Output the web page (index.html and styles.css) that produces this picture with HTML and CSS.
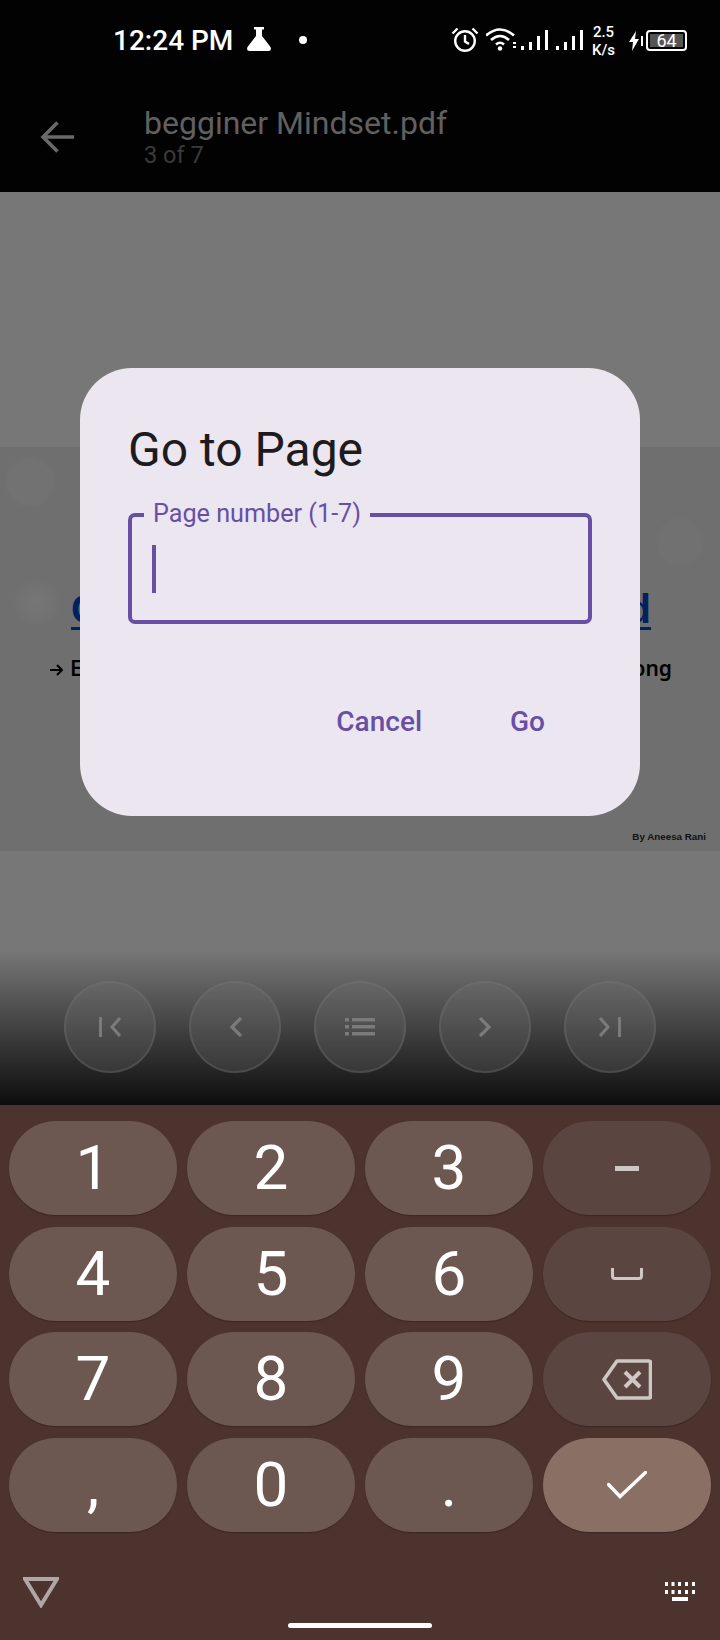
FILE: index.html
```html
<!DOCTYPE html>
<html lang="en">
<head>
    <meta charset="UTF-8">
    <meta name="viewport" content="width=device-width, initial-scale=1.0">
    <title>Go to Page</title>
    <link rel="stylesheet" href="styles.css">
</head>
<body>
    <div id="screen">
        <div class="status-bar">
            <span class="clock">12:24 PM</span>
            <svg class="flask" width="26" height="24" viewBox="0 0 26 24"><path d="M8 0h10v2.500h-2v6.500l8.500 11q1.500 4-2 4h-19q-3.500 0-2-4l8.500-11v-6.500h-2z" fill="#fff"/></svg>
            <span class="dot"></span>
            <div class="status-icons">
                <svg width="28" height="25" viewBox="0 0 28 25" fill="none" stroke="#fff" stroke-width="2.400"><circle cx="14" cy="14" r="9.800"/><path d="M14 8v6.500l4 2.500M1.500 6.500l5-5M26.500 6.500l-5-5"/></svg>
                <svg class="wifi" width="31" height="24" viewBox="0 0 31 24" fill="none" stroke="#fff" stroke-width="2.600"><path d="M0 8.500q14-12 28 0M5 13q9-8 18 0M10 17.500q4-3.500 8 0"/><circle cx="14" cy="21.500" r="2.200" fill="#fff" stroke="none"/><path d="M27 16h3M27 20h3" stroke-width="2"/></svg>
                <svg class="signal" width="62" height="24" viewBox="0 0 62 24" fill="#fff"><rect x="0" y="19" width="3" height="4"/><rect x="8" y="15" width="3" height="8"/><rect x="16" y="9" width="3" height="14"/><rect x="24" y="3" width="3" height="20"/><rect x="35" y="19" width="3" height="4"/><rect x="43" y="15" width="3" height="8"/><rect x="51" y="9" width="3" height="14"/><rect x="59" y="3" width="3" height="20"/></svg>
                <div class="speed"><span>2.5</span><span>K/s</span></div>
                <svg class="bolt" width="14" height="20" viewBox="0 0 14 20" fill="#fff"><path d="M7 0l-7 11h4l-1 9 7-12h-4zM12 5h2v10h-2z"/></svg>
                <div class="battery"><span class="battery-fill">64</span></div>
            </div>
        </div>
        <div class="app-bar">
            <svg class="back" width="34" height="32" viewBox="0 0 34 32" fill="none" stroke="#6a6a6a" stroke-width="3.600"><path d="M34 16H3M17.500 1.500L3 16l14.500 14.500"/></svg>
            <div class="app-title">
                <div class="file-name">begginer Mindset.pdf</div>
                <div class="page-count">3 of 7</div>
            </div>
        </div>

        <div class="viewer">
            <div class="doc">
                <div class="doc-heading"><span>C</span><span>d</span></div>
                <div class="doc-line">
                    <span class="doc-lead"><svg width="13" height="12" viewBox="0 0 13 12" fill="none" stroke="#000" stroke-width="2.200"><path d="M0 6h11.500M7 1l5 5-5 5"/></svg>E</span>
                    <span>ong</span>
                </div>
                <div class="doc-author">By Aneesa Rani</div>
            </div>

            <div class="controls">
                <button class="round-btn"><svg width="22" height="20" viewBox="0 0 22 20" fill="none" stroke="#7b7b7b" stroke-width="3"><path d="M1.500 0v20M21 1l-8 9 8 9"/></svg></button>
                <button class="round-btn"><svg width="13" height="20" viewBox="0 0 13 20" fill="none" stroke="#7b7b7b" stroke-width="3.200"><path d="M12 1l-9 9 9 9"/></svg></button>
                <button class="round-btn"><svg width="30" height="18" viewBox="0 0 30 18" fill="#7b7b7b"><rect x="0" y="0" width="4" height="3.500"/><rect x="7" y="0" width="23" height="3.500"/><rect x="0" y="7" width="4" height="3.500"/><rect x="7" y="7" width="23" height="3.500"/><rect x="0" y="14" width="4" height="3.500"/><rect x="7" y="14" width="23" height="3.500"/></svg></button>
                <button class="round-btn"><svg width="13" height="20" viewBox="0 0 13 20" fill="none" stroke="#7b7b7b" stroke-width="3.200"><path d="M1 1l9 9-9 9"/></svg></button>
                <button class="round-btn"><svg width="22" height="20" viewBox="0 0 22 20" fill="none" stroke="#7b7b7b" stroke-width="3"><path d="M20.500 0v20M1 1l8 9-8 9"/></svg></button>
            </div>

            <div class="dialog">
                <h2 class="dialog-title">Go to Page</h2>
                <div class="field">
                    <label class="field-label">Page number (1-7)</label>
                    <span class="caret"></span>
                </div>
                <div class="dialog-actions">
                    <button class="text-btn">Cancel</button>
                    <button class="text-btn">Go</button>
                </div>
            </div>
        </div>

        <div class="keyboard">
            <div class="keys">
                <div class="key">1</div>
                <div class="key">2</div>
                <div class="key">3</div>
                <div class="key func"><svg width="24" height="5" viewBox="0 0 24 5" fill="#cfc7c4"><rect width="24" height="5"/></svg></div>
                <div class="key">4</div>
                <div class="key">5</div>
                <div class="key">6</div>
                <div class="key func"><svg width="32" height="12" viewBox="0 0 32 12" fill="none" stroke="#cfc7c4" stroke-width="3"><path d="M1.500 0v8q0 2.500 2.500 2.500h24q2.500 0 2.500-2.500V0"/></svg></div>
                <div class="key">7</div>
                <div class="key">8</div>
                <div class="key">9</div>
                <div class="key func"><svg width="50" height="41" viewBox="0 0 50 41" fill="none" stroke="#cfc7c4" stroke-width="3.600" stroke-linejoin="round"><path d="M15 2h32q1.500 0 1.500 1.500v34q0 1.500-1.500 1.500H15L2 20.500z"/><path d="M23 13l15 15M38 13L23 28" stroke-width="4"/></svg></div>
                <div class="key">,</div>
                <div class="key">0</div>
                <div class="key">.</div>
                <div class="key enter"><svg width="40" height="28" viewBox="0 0 40 28" fill="none" stroke="#fff" stroke-width="3.400"><path d="M1.500 13.500L13 25.500 38.500 1.500" stroke-linecap="round"/></svg></div>
            </div>
            <div class="keyboard-bottom">
                <svg width="36" height="32" viewBox="0 0 36 32" fill="none" stroke="#b0a6a3" stroke-width="4"><path d="M2 3h32L18 29z"/></svg>
                <svg class="kb-icon" width="30" height="19" viewBox="0 0 30 19" fill="#fff"><rect x="0" y="0" width="3" height="4"/><rect x="6.500" y="0" width="3" height="4"/><rect x="13" y="0" width="3" height="4"/><rect x="20" y="0" width="3" height="4"/><rect x="27" y="0" width="3" height="4"/><rect x="0" y="8" width="3" height="4"/><rect x="6.500" y="8" width="3" height="4"/><rect x="13" y="8" width="3" height="4"/><rect x="20" y="8" width="3" height="4"/><rect x="27" y="8" width="3" height="4"/><rect x="7" y="15" width="16" height="4"/></svg>
            </div>
            <div class="home-bar"></div>
        </div>
    </div>
</body>
</html>
```

FILE: styles.css
```css
* {
    box-sizing: border-box;
}
body {
    margin: 0;
    font-family: Roboto, sans-serif;
    background-color: #000;
}
#screen {
    width: 720px;
    height: 1640px;
    display: flex;
    flex-direction: column;
    overflow: hidden;
}
.status-bar {
    height: 80px;
    padding: 27px 33px 0 113px;
    display: flex;
    align-items: flex-start;
    background-color: #020203;
    color: #fff;
}
.clock {
    font-size: 28px;
    font-weight: 500;
    line-height: 28px;
}
.flask {
    margin-left: 13px;
}
.dot {
    width: 8px;
    height: 8px;
    margin: 9px 0 0 27px;
    border-radius: 50%;
    background-color: #fff;
}
.status-icons {
    margin-left: auto;
    display: flex;
    align-items: flex-start;
}
.wifi {
    margin-left: 7px;
}
.signal {
    margin-left: 4px;
}
.speed {
    display: flex;
    flex-direction: column;
    margin: -4px 0 0 7px;
    width: 27px;
    font-size: 15px;
    font-weight: 500;
    line-height: 18px;
    text-align: center;
}
.bolt {
    margin: 4px 0 0 12px;
}
.battery {
    width: 41px;
    height: 21px;
    margin: 3px 0 0 3px;
    padding: 2px;
    border: 2px solid #fff;
    border-radius: 4px;
}
.battery-fill {
    display: block;
    height: 100%;
    background-color: #555;
    font-size: 18px;
    line-height: 14px;
    text-align: center;
}
.app-bar {
    height: 112px;
    padding: 25px 0 0 40px;
    display: flex;
    align-items: flex-start;
    background-color: #020203;
}
.back {
    margin-top: 16px;
}
.app-title {
    margin-left: 70px;
}
.file-name {
    color: #606060;
    font-size: 32px;
    line-height: 36px;
}
.page-count {
    color: #3a3a3a;
    font-size: 23.500px;
    line-height: 28px;
}

.viewer {
    position: relative;
    height: 913px;
    padding-top: 255px;
    background-color: #777;
}
.doc {
    height: 404px;
    padding-top: 146px;
    background-color: #706f70;
    background-image:
        radial-gradient(circle at 30px 35px, #727272 0, #727272 22px, transparent 26px),
        radial-gradient(circle at 37px 155px, #767676 0, #727272 18px, transparent 24px),
        radial-gradient(circle at 680px 95px, #727171 0, #727171 22px, transparent 25px);
}
.doc-heading {
    margin: 0 69px 0 71px;
    display: flex;
    justify-content: space-between;
    height: 37px;
    border-bottom: 3px solid #00235f;
    color: #00235f;
    font-family: "Liberation Sans", sans-serif;
    font-size: 40px;
    font-weight: 700;
    line-height: 32px;
}
.doc-line {
    margin: 24px 48px 0 50px;
    display: flex;
    justify-content: space-between;
    color: #000;
    font-family: "Noto Sans", sans-serif;
    font-size: 21px;
    font-weight: 600;
    line-height: 28px;
}
.doc-lead svg {
    margin-right: 7px;
}
.doc-author {
    margin: 149px 14px 0 0;
    color: #111;
    font-family: "Liberation Sans", sans-serif;
    font-size: 9.800px;
    font-weight: 700;
    text-align: right;
}
.controls {
    position: absolute;
    left: 0;
    right: 0;
    bottom: 0;
    height: 155px;
    padding-top: 31px;
    display: flex;
    justify-content: center;
    align-items: flex-start;
    gap: 33px;
    background: linear-gradient(to bottom, rgba(13, 13, 13, 0), #0d0d0d);
}
.round-btn {
    width: 92px;
    height: 92px;
    padding: 0;
    display: flex;
    justify-content: center;
    align-items: center;
    border: 2px solid rgba(120, 120, 120, 0.3);
    border-radius: 50%;
    background-color: rgba(120, 120, 120, 0.24);
}

.dialog {
    position: absolute;
    top: 176px;
    left: 80px;
    width: 560px;
    height: 448px;
    padding: 56px 51px 0 48px;
    border-radius: 52px;
    background-color: #ece6f0;
}
.dialog-title {
    margin: 0;
    color: #1d1b20;
    font-size: 48px;
    font-weight: 400;
    line-height: 52px;
}
.field {
    position: relative;
    width: 464px;
    height: 111px;
    margin-top: 37px;
    padding-left: 20px;
    display: flex;
    align-items: center;
    border: 4px solid #6750a4;
    border-radius: 7px;
}
.field-label {
    position: absolute;
    top: -18px;
    left: 12px;
    padding: 0 9px;
    background-color: #ece6f0;
    color: #6750a4;
    font-size: 25.200px;
    line-height: 30px;
}
.caret {
    width: 4px;
    height: 48px;
    background-color: #6750a4;
}
.dialog-actions {
    margin-top: 73px;
    display: flex;
    justify-content: flex-end;
}
.text-btn {
    height: 48px;
    padding: 0 44px 0 44px;
    border: none;
    background: none;
    color: #6750a4;
    font-family: Roboto, sans-serif;
    font-size: 28px;
    font-weight: 500;
}

.keyboard {
    height: 535px;
    padding: 16px 9px 0;
    background-color: #4d332e;
}
.keys {
    display: grid;
    grid-template-columns: repeat(4, 168px);
    grid-auto-rows: 94px;
    column-gap: 10px;
    row-gap: 11.700px;
}
.key {
    display: flex;
    justify-content: center;
    align-items: center;
    border-radius: 47px;
    background-color: #6c5851;
    box-shadow: 0 1px 1px #3c2622;
    color: #fff;
    font-size: 62px;
    line-height: 94px;
}
.key.func {
    background-color: #5b4540;
}
.key.enter {
    background-color: #8a6f64;
}
.keyboard-bottom {
    margin-top: 44px;
    padding: 0 16px 0 14px;
    display: flex;
    justify-content: space-between;
    align-items: flex-start;
}
.kb-icon {
    margin-top: 6px;
}
.home-bar {
    width: 144px;
    height: 5px;
    margin: 15px auto 0;
    border-radius: 3px;
    background-color: #fff;
}
```
